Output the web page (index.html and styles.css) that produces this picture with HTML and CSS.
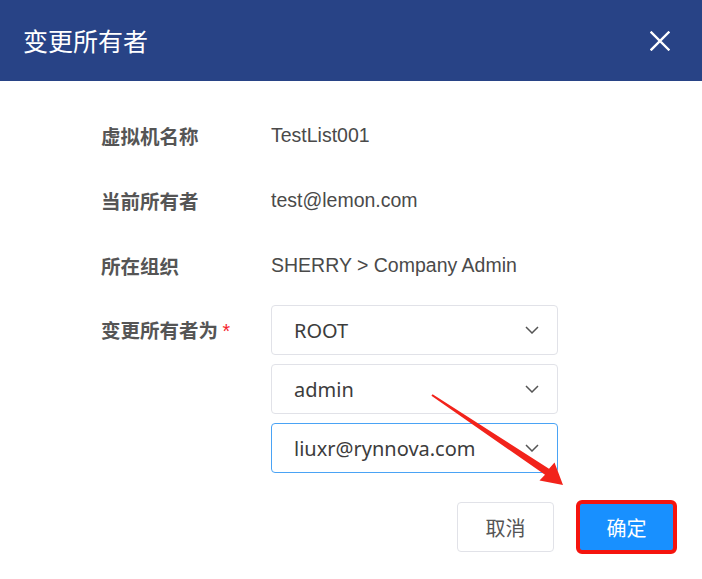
FILE: index.html
```html
<!DOCTYPE html>
<html lang="zh-CN">
<head>
<meta charset="utf-8">
<title>变更所有者</title>
<link rel="stylesheet" href="styles.css">
</head>
<body>
<div class="dialog">
  <header class="dialog-header">
    <h1 class="dialog-title">变更所有者</h1>
    <button class="close-btn" aria-label="关闭">
      <svg width="20" height="20" viewBox="0 0 20 20"><path d="M1.5 1.5 L18.5 18.5 M18.5 1.5 L1.5 18.5" stroke="#fff" stroke-width="2.4" stroke-linecap="square" fill="none"/></svg>
    </button>
  </header>
  <main class="dialog-body">
    <div class="info-row"><span class="label">虚拟机名称</span><span class="value">TestList001</span></div>
    <div class="info-row"><span class="label">当前所有者</span><span class="value">test@lemon.com</span></div>
    <div class="info-row"><span class="label">所在组织</span><span class="value">SHERRY &gt; Company Admin</span></div>
    <div class="form-row">
      <span class="label form-label">变更所有者为 <span class="req">*</span></span>
      <div class="selects">
        <div class="select"><span>ROOT</span><svg class="chev" width="14" height="8" viewBox="0 0 14 8"><path d="M1 1 L7 7 L13 1" stroke="#555" stroke-width="1.5" fill="none"/></svg></div>
        <div class="select"><span>admin</span><svg class="chev" width="14" height="8" viewBox="0 0 14 8"><path d="M1 1 L7 7 L13 1" stroke="#555" stroke-width="1.5" fill="none"/></svg></div>
        <div class="select active"><span>liuxr@rynnova.com</span><svg class="chev" width="14" height="8" viewBox="0 0 14 8"><path d="M1 1 L7 7 L13 1" stroke="#555" stroke-width="1.5" fill="none"/></svg></div>
      </div>
    </div>
    <div class="actions">
      <button class="btn btn-cancel">取消</button>
      <button class="btn btn-primary">确定</button>
    </div>
  </main>
  <svg class="annot-arrow" width="702" height="579" viewBox="0 0 702 579">
    <polygon points="432.6,394.2 549,468.8 554.5,462.5 563,485 539.5,480.5 545,474.8 431.4,395.8" fill="#f2231b"/>
  </svg>
</div>
</body>
</html>
```
FILE: styles.css
```css
* { box-sizing: border-box; }
html, body { margin: 0; padding: 0; background: #fff; }
body { width: 702px; height: 579px; overflow: hidden; font-family: "Noto Sans", "Noto Sans CJK SC", sans-serif; }
.dialog { position: relative; width: 702px; height: 579px; }
.dialog-header {
  height: 81px; background: #284386; display: flex; align-items: center;
  justify-content: space-between; padding: 0 32px 0 23px;
}
.dialog-title { margin: 0; font-size: 25px; font-weight: 400; color: #fff; font-family: "Noto Sans CJK SC", sans-serif; line-height: 1; }
.close-btn { background: none; border: 0; padding: 0; width: 20px; height: 20px; display: flex; cursor: pointer; }
.dialog-body { padding: 22px 27px 0 101px; }
.info-row { display: flex; height: 65px; align-items: center; }
.label { width: 170px; flex: none; font-family: "Noto Sans CJK SC", sans-serif; font-weight: 700; font-size: 19.5px; color: #555; }
.value { font-family: "Liberation Sans", Arial, sans-serif; font-size: 19.5px; color: #4a4a4a; }
.form-row { display: flex; margin-top: 7px; align-items: flex-start; }
.form-label { line-height: 50px; }
.req { color: #f5222d; font-weight: 400; font-family: "Liberation Sans", sans-serif; }
.selects { display: flex; flex-direction: column; gap: 9px; }
.select {
  width: 287px; height: 50px; border: 1px solid #e1e2e8; border-radius: 4px;
  display: flex; align-items: center; justify-content: space-between;
  padding: 0 18px 0 22px; font-size: 20px; color: #3c3c3c;
}
.select.active { border-color: #4aa3f5; }
.chev { display: block; }
.actions { display: flex; justify-content: flex-end; gap: 24px; margin-top: 29px; }
.btn {
  width: 97px; height: 50px; border-radius: 4px; font-family: "Noto Sans CJK SC", sans-serif;
  font-size: 20px; cursor: pointer;
}
.btn-cancel { background: #fff; border: 1px solid #e1e2e8; color: #555; }
.btn-primary { background: #1890ff; border: 0; color: #fff; outline: 4px solid #f5140e; outline-offset: -2px; }
.annot-arrow { position: absolute; left: 0; top: 0; pointer-events: none; }
```
